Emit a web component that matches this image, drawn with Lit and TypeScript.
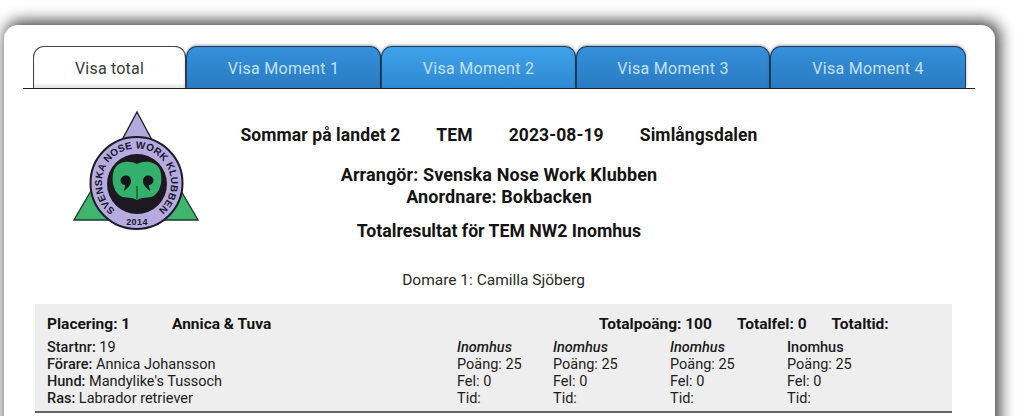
import { LitElement, html, css, svg } from "lit";
import { customElement } from "lit/decorators.js";

const tabs = [
  { label: "Visa total", w: 153, cls: "active" },
  { label: "Visa Moment 1", w: 195, cls: "" },
  { label: "Visa Moment 2", w: 195, cls: "light" },
  { label: "Visa Moment 3", w: 194, cls: "" },
  { label: "Visa Moment 4", w: 196, cls: "" },
];

const moments = [
  { w: 96, italic: true },
  { w: 117, italic: true },
  { w: 117, italic: true },
  { w: 100, italic: false },
];

const logo = svg`
  <svg class="logo" viewBox="0 0 128 126" width="128" height="126">
    <polygon points="65,2 95,58 35,58" fill="#b4a9dc" stroke="#222" stroke-width="1.4"/>
    <polygon points="30,62 2,110 56,110" fill="#3fb56f" stroke="#1d3a2a" stroke-width="1.4"/>
    <polygon points="98,62 126,110 72,110" fill="#3fb56f" stroke="#1d3a2a" stroke-width="1.4"/>
    <circle cx="64.5" cy="73" r="46" fill="#b5abdf" stroke="#1c1a2c" stroke-width="2"/>
    <circle cx="65" cy="74" r="30" fill="#1c1a20"/>
    <path d="M65 54c8-4 19-3 23 6 3 9 1 20-5 25-5 4-10 1-18 5-8-4-13-1-18-5-6-5-8-16-5-25 4-9 15-10 23-6z" fill="#33b06c"/>
    <path d="M50 67c4-3 9-1 9 4s-4 7-7 10c0-3 2-5 1-6-4 0-6-5-3-8z" fill="#14161a"/>
    <path d="M80 67c-4-3-9-1-9 4s4 7 7 10c0-3-2-5-1-6 4 0 6-5 3-8z" fill="#14161a"/>
    <path d="M65 76v13" stroke="#14361f" stroke-width="1"/>
    <defs>
      <path id="ring" d="M43.3 100.2A34.5 34.5 0 1 1 85.7 100.2"/>
    </defs>
    <text class="ring"><textPath href="#ring" textLength="170" lengthAdjust="spacing">SVENSKA NOSE WORK KLUBBEN</textPath></text>
    <text class="year" x="65" y="115" text-anchor="middle">2014</text>
  </svg>
`;

@customElement("app-root")
export class AppRoot extends LitElement {
  static styles = css`
    :host {
      display: block;
      height: 416px;
      overflow: hidden;
      background: #fff;
      font-family: Roboto, "Liberation Sans", sans-serif;
      color: #1c1c1c;
      padding: 25px 29px 0 4px;
      box-sizing: border-box;
    }
    .card {
      background: #fff;
      border-radius: 14px 14px 0 0;
      height: 500px;
      padding: 21px 20px 0 19px;
      box-sizing: border-box;
      box-shadow: 3px -2px 15px 2px rgba(0, 0, 0, 0.75);
    }
    .tabs {
      display: flex;
      height: 43px;
      padding-left: 10px;
      border-bottom: 1px solid #222;
      box-sizing: border-box;
    }
    .tab {
      box-sizing: border-box;
      height: 42px;
      display: flex;
      align-items: center;
      justify-content: center;
      font-size: 16px;
      letter-spacing: 0.3px;
      color: #c4e0f8;
      border: 1px solid #1b3c5e;
      border-bottom: none;
      border-radius: 11px 11px 0 0;
      background: linear-gradient(#3490da, #2a7cc2);
      box-shadow: 0 -1px 3px rgba(0, 0, 0, 0.35);
      padding-top: 1px;
    }
    .tab.light {
      background: linear-gradient(#3fa2ea, #2f8ad2);
    }
    .tab.active {
      background: #fff;
      color: #3a3a3a;
      border-color: #444;
      box-shadow: inset 0 -3px 3px rgba(0, 0, 0, 0.1);
      letter-spacing: 0.2px;
    }
    .head {
      display: grid;
      margin-top: 21px;
    }
    .head > * {
      grid-area: 1 / 1;
    }
    .logo-wrap {
      padding-left: 49px;
    }
    .logo {
      display: block;
    }
    .ring {
      font: 700 10px "Liberation Sans", sans-serif;
      fill: #17172a;
    }
    .year {
      font: 700 9px "Liberation Sans", sans-serif;
      letter-spacing: 0.4px;
      fill: #17172a;
    }
    .titles {
      display: flex;
      flex-direction: column;
      align-items: center;
      font-weight: 700;
      padding-top: 15px;
      color: #141414;
    }
    .event {
      display: flex;
      gap: 36px;
      line-height: 20px;
      font-size: 17.5px;
      letter-spacing: 0.1px;
    }
    .org {
      margin-top: 19px;
      text-align: center;
      line-height: 22px;
      font-size: 18px;
      letter-spacing: 0.1px;
    }
    .result {
      margin-top: 12px;
      line-height: 22px;
      font-size: 17.7px;
    }
    .judge {
      margin-top: 28px;
      margin-right: 11px;
      font-size: 15.5px;
      font-weight: 400;
      line-height: 20px;
      color: #2a2a2a;
    }
    .entry {
      margin: 14px 23px 0 12px;
      background: #eeeeee;
      border-bottom: 2px solid #666;
      height: 109px;
      box-sizing: border-box;
      padding: 10px 12px 0;
      font-size: 14.5px;
      line-height: 17px;
    }
    .top {
      display: flex;
      font-size: 15.5px;
      font-weight: 700;
      line-height: 20px;
      color: #141414;
    }
    .place {
      width: 125px;
    }
    .names {
      width: 427px;
    }
    .fel {
      margin-left: 25px;
    }
    .tid {
      margin-left: 25px;
    }
    .bottom {
      display: flex;
      margin-top: 5px;
    }
    .info {
      width: 410px;
    }
    b {
      font-weight: 500;
    }
    .col i {
      font-style: italic;
      font-weight: 500;
    }
  `;

  render() {
    return html`
      <div class="card">
        <div class="tabs">
          ${tabs.map(
            (t) =>
              html`<div class="tab ${t.cls}" style="width:${t.w}px">${t.label}</div>`
          )}
        </div>
        <div class="head">
          <div class="logo-wrap">${logo}</div>
          <div class="titles">
            <div class="event">
              <span>Sommar på landet 2</span><span>TEM</span><span>2023-08-19</span><span>Simlångsdalen</span>
            </div>
            <div class="org">Arrangör: Svenska Nose Work Klubben<br />Anordnare: Bokbacken</div>
            <div class="result">Totalresultat för TEM NW2 Inomhus</div>
            <div class="judge">Domare 1: Camilla Sjöberg</div>
          </div>
        </div>
        <div class="entry">
          <div class="top">
            <span class="place">Placering: 1</span>
            <span class="names">Annica &amp; Tuva</span>
            <span>Totalpoäng: 100</span>
            <span class="fel">Totalfel: 0</span>
            <span class="tid">Totaltid:</span>
          </div>
          <div class="bottom">
            <div class="info">
              <div><b>Startnr:</b> 19</div>
              <div><b>Förare:</b> Annica Johansson</div>
              <div><b>Hund:</b> Mandylike's Tussoch</div>
              <div><b>Ras:</b> Labrador retriever</div>
            </div>
            ${moments.map(
              (m) => html`
                <div class="col" style="width:${m.w}px">
                  <div>${m.italic ? html`<i>Inomhus</i>` : html`<b>Inomhus</b>`}</div>
                  <div>Poäng: 25</div>
                  <div>Fel: 0</div>
                  <div>Tid:</div>
                </div>
              `
            )}
          </div>
        </div>
      </div>
    `;
  }
}
